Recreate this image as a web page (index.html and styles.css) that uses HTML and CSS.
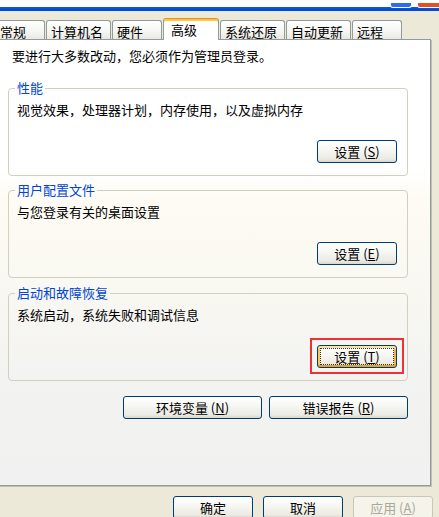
FILE: index.html
```html
<!DOCTYPE html>
<html>
<head>
  <meta charset="utf-8">
  <title>系统属性</title>
  <link rel="stylesheet" href="styles.css">
</head>
<body>
  <div class="titlebar">
    <span class="title-btn help"></span>
    <span class="title-btn close"></span>
  </div>

  <div class="tabs">
    <div class="tab first">常规</div>
    <div class="tab long">计算机名</div>
    <div class="tab">硬件</div>
    <div class="tab active">高级</div>
    <div class="tab long">系统还原</div>
    <div class="tab long">自动更新</div>
    <div class="tab">远程</div>
  </div>

  <div class="panel">
    <p class="notice">要进行大多数改动，您必须作为管理员登录。</p>

    <fieldset class="group">
      <legend>性能</legend>
      <p>视觉效果，处理器计划，内存使用，以及虚拟内存</p>
      <div class="group-actions">
        <button class="btn">设置 (<u>S</u>)</button>
      </div>
    </fieldset>

    <fieldset class="group">
      <legend>用户配置文件</legend>
      <p>与您登录有关的桌面设置</p>
      <div class="group-actions">
        <button class="btn">设置 (<u>E</u>)</button>
      </div>
    </fieldset>

    <fieldset class="group last">
      <legend>启动和故障恢复</legend>
      <p>系统启动，系统失败和调试信息</p>
      <div class="group-actions">
        <span class="marked">
          <button class="btn focused">设置 (<u>T</u>)</button>
        </span>
      </div>
    </fieldset>

    <div class="panel-actions">
      <button class="btn wide">环境变量 (<u>N</u>)</button>
      <button class="btn wide">错误报告 (<u>R</u>)</button>
    </div>
  </div>

  <div class="dialog-actions">
    <button class="btn">确定</button>
    <button class="btn">取消</button>
    <button class="btn" disabled>应用 (<u>A</u>)</button>
  </div>
</body>
</html>
```

FILE: styles.css
```css
body {
  margin: 0;
  width: 439px;
  height: 517px;
  overflow: hidden;
  background: #ece9d8;
  font-family: "Noto Sans CJK SC", "Liberation Sans", sans-serif;
  font-size: 13px;
  color: #000;
}
p {
  margin: 0;
  line-height: 12px;
}

/* window frame remains */
.titlebar {
  height: 11px;
  display: flex;
  justify-content: flex-end;
  align-items: flex-end;
  gap: 5px;
  background: linear-gradient(#fff 0, #fff 7px, #0a58dc 7px, #0047d0 11px);
}
.title-btn {
  width: 20px;
  height: 4px;
  margin-bottom: 3px;
  border: 1px solid #fff;
  border-top: none;
  border-radius: 0 0 3px 3px;
}
.help {
  background: #2a6ef0;
}
.close {
  width: 22px;
  margin-right: -2px;
  background: #e0502c;
}

/* tabs */
.tabs {
  height: 28px;
  display: flex;
  align-items: flex-end;
}
.tab {
  box-sizing: border-box;
  width: 50px;
  height: 19px;
  margin-right: 1px;
  padding: 4px 0 0 4px;
  line-height: 13px;
  border: 1px solid #919b9c;
  border-bottom: none;
  border-radius: 3px 3px 0 0;
  background: linear-gradient(#fff, #f5f5f1 60%, #e9e8e2);
  white-space: nowrap;
}
.tab.first {
  margin-left: -5px;
}
.tab.long {
  width: 65px;
}
.tab.active {
  position: relative;
  z-index: 1;
  width: 56px;
  height: 22px;
  margin-bottom: -1px;
  padding-left: 7px;
  border-top-color: #e68b2c;
  background: #fff;
  box-shadow: inset 0 2px #ffc83c;
}

/* tab page */
.panel {
  box-sizing: border-box;
  width: 432px;
  height: 447px;
  margin-left: -1px;
  padding-top: 10px;
  border: 1px solid #919b9c;
  background: linear-gradient(#fff 0, #fff 29%, #fdfbf3 36%, #f9f8f2 55%, #f3f3f1 75%, #f1f1f1 100%);
  box-shadow: 1px 1px 0 #c2c0b4;
}
.notice {
  padding-left: 12px;
}

.group {
  box-sizing: border-box;
  width: 400px;
  height: 94px;
  margin: 20px 0 0 8px;
  padding: 10px 10px 11px 8px;
  border: 1px solid #d0d0bf;
  border-radius: 4px;
}
.group + .group {
  margin-top: 8px;
}
.group.last {
  margin-top: 9px;
}
.group legend {
  margin-left: -2px;
  padding: 0 2px;
  line-height: 12px;
  color: #0046d5;
}
.group-actions {
  display: flex;
  justify-content: flex-end;
  margin-top: 24px;
}

.panel-actions {
  width: 400px;
  margin: 15px 0 0 8px;
  display: flex;
  justify-content: flex-end;
  gap: 7px;
}

.dialog-actions {
  display: flex;
  justify-content: flex-end;
  gap: 10px;
  margin-top: 10px;
  padding-right: 6px;
}

/* buttons */
.btn {
  box-sizing: border-box;
  width: 80px;
  height: 23px;
  padding: 0;
  font-family: inherit;
  font-size: 13px;
  line-height: 13px;
  color: #000;
  border: 1px solid #003c74;
  border-radius: 3px;
  background: linear-gradient(#fff, #f6f6f2 45%, #ebeae4 85%, #d9d5cb);
}
.btn u {
  text-underline-offset: 1px;
}
.btn.wide {
  width: 139px;
}
.btn.focused {
  box-shadow: inset 0 2px #ffe39c, inset 0 -2px #eaa11f, inset 2px 0 #fbc75a, inset -2px 0 #f3b53c;
  outline: 1px dotted #333;
  outline-offset: -4px;
}
.btn:disabled {
  color: #aca899;
  border-color: #c9c7ba;
  background: #f5f4ea;
}

.marked {
  position: relative;
  display: inline-flex;
}
.marked::after {
  content: "";
  position: absolute;
  top: -7px;
  left: -7px;
  right: -7px;
  bottom: -6px;
  border: 2px solid #ec3237;
}
```
